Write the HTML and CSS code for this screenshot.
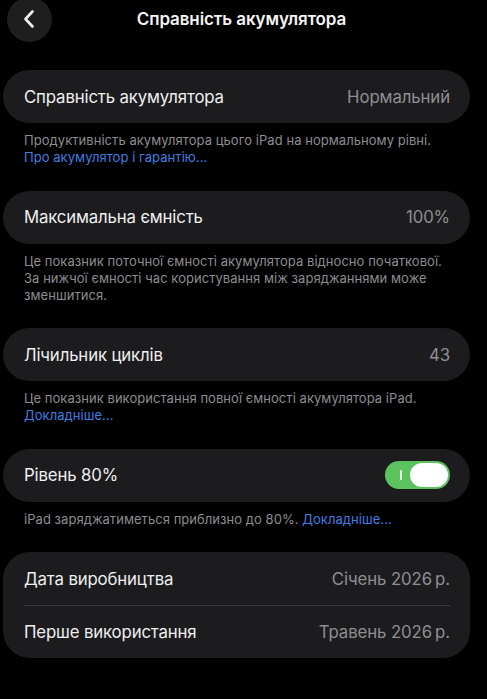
FILE: index.html
```html
<!DOCTYPE html>
<html lang="uk">
<head>
<meta charset="utf-8">
<title>Справність акумулятора</title>
<link rel="stylesheet" href="styles.css">
</head>
<body>
<div class="page">
  <header class="nav">
    <button class="back" aria-label="Назад">
      <svg width="14" height="20" viewBox="0 0 14 20"><path d="M10.5 2.5 L3.5 10 L10.5 17.5" fill="none" stroke="#f2f2f2" stroke-width="2.6" stroke-linecap="round" stroke-linejoin="round"/></svg>
    </button>
    <h1 class="title">Справність акумулятора</h1>
    <span></span>
  </header>

  <section class="group">
    <div class="card">
      <div class="row"><span class="label">Справність акумулятора</span><span class="value">Нормальний</span></div>
    </div>
    <p class="note">Продуктивність акумулятора цього iPad на нормальному рівні.<br><a class="link">Про акумулятор і гарантію...</a></p>
  </section>

  <section class="group">
    <div class="card">
      <div class="row"><span class="label">Максимальна ємність</span><span class="value">100%</span></div>
    </div>
    <p class="note">Це показник поточної ємності акумулятора відносно початкової. За нижчої ємності час користування між заряджаннями може зменшитися.</p>
  </section>

  <section class="group">
    <div class="card">
      <div class="row"><span class="label">Лічильник циклів</span><span class="value">43</span></div>
    </div>
    <p class="note">Це показник використання повної ємності акумулятора iPad.<br><a class="link">Докладніше...</a></p>
  </section>

  <section class="group">
    <div class="card">
      <div class="row"><span class="label">Рівень 80%</span>
        <span class="toggle"><span class="tick"></span><span class="knob"></span></span>
      </div>
    </div>
    <p class="note">iPad заряджатиметься приблизно до 80%. <a class="link">Докладніше...</a></p>
  </section>

  <section class="group">
    <div class="card card-list">
      <div class="row"><span class="label">Дата виробництва</span><span class="value">Січень 2026&#8239;р.</span></div>
      <div class="row"><span class="label">Перше використання</span><span class="value">Травень 2026&#8239;р.</span></div>
    </div>
  </section>
</div>
</body>
</html>
```

FILE: styles.css
```css
html, body {
  margin: 0;
  padding: 0;
  background: #000;
}
body {
  font-family: Inter, "Noto Sans", sans-serif;
  color: #f2f2f2;
  overflow: hidden;
}
.page {
  padding: 0 17px 0 3px;
}
.nav {
  display: grid;
  grid-template-columns: 49px 1fr 43px;
  align-items: center;
  margin-top: -4px;
  height: 46px;
  margin-bottom: 28px;
}
.back {
  width: 45px;
  height: 45px;
  margin-left: 4px;
  border-radius: 50%;
  border: none;
  background: #1e1e1f;
  display: flex;
  align-items: center;
  justify-content: center;
  padding: 0 2px 0 0;
}
.title {
  margin: 0;
  text-align: center;
  font-size: 17px;
  font-weight: 600;
  color: #f4f4f4;
  letter-spacing: -0.1px;
  transform: translateX(2px);
}
.group {
  margin-bottom: 24.5px;
}
.card {
  background: #1c1c1e;
  border-radius: 27px;
  padding: 0 20px 0 21px;
}
.card-list .row + .row {
  border-top: 1px solid #38383a;
}
.row {
  display: flex;
  align-items: center;
  justify-content: space-between;
  height: 53px;
  box-sizing: border-box;
}
.label {
  font-size: 16.8px;
  color: #efeff0;
  letter-spacing: -0.15px;
}
.value {
  font-size: 16.8px;
  color: #8e8e92;
  letter-spacing: -0.1px;
}
.note {
  margin: 9px 0 0;
  padding: 0 20px 0 21px;
  font-size: 13px;
  line-height: 17px;
  color: #8d8d92;
  letter-spacing: 0.05px;
}
.link {
  color: #3f7fe0;
}
.toggle {
  position: relative;
  width: 65px;
  height: 28px;
  border-radius: 14px;
  background: #5cc25d;
  display: block;
}
.tick {
  position: absolute;
  left: 15px;
  top: 9px;
  width: 1.5px;
  height: 10px;
  background: #e8ffe8;
  border-radius: 1px;
}
.knob {
  position: absolute;
  right: 2px;
  top: 2px;
  width: 38px;
  height: 24px;
  border-radius: 12px;
  background: #fff;
}
```
